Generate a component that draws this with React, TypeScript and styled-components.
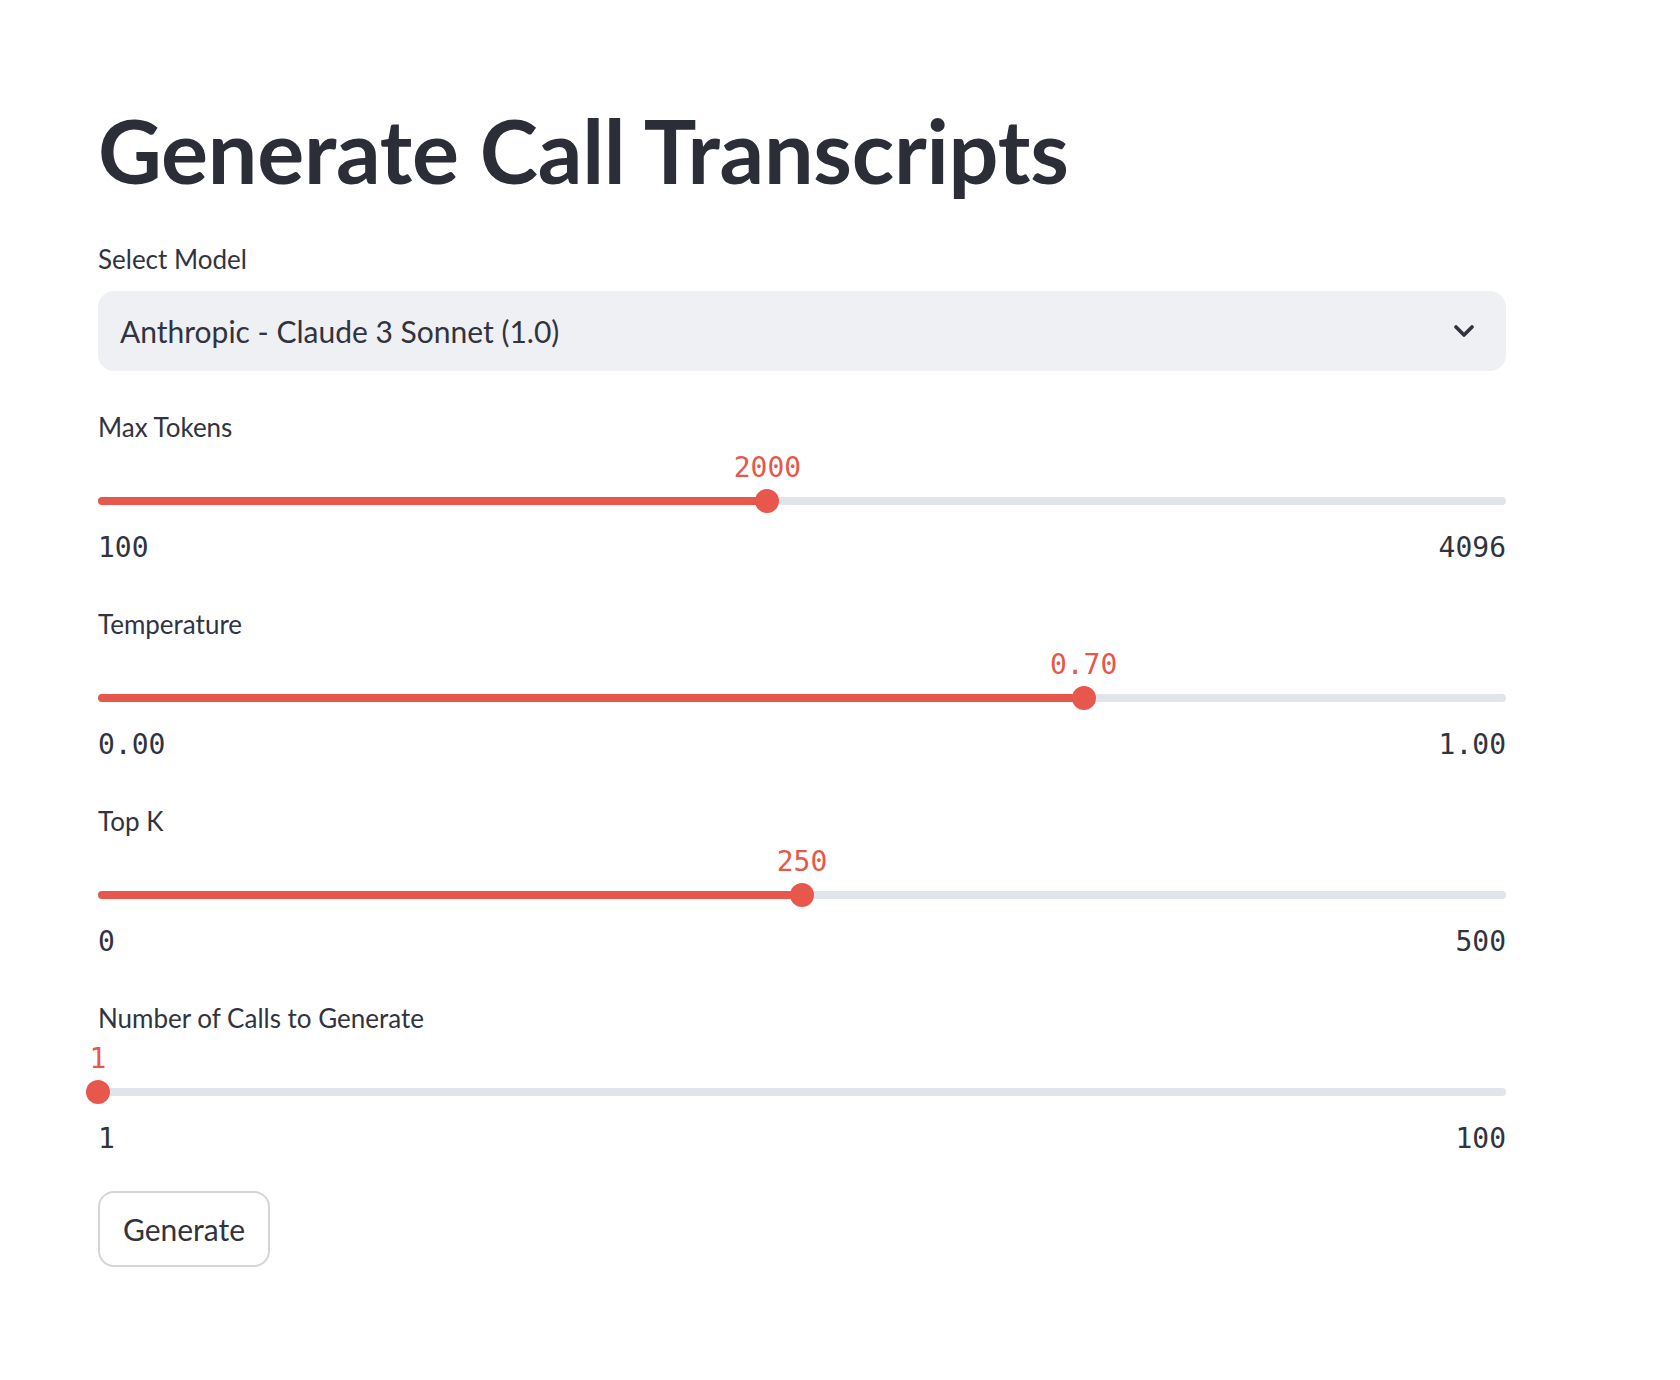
import styled, { createGlobalStyle } from 'styled-components';

const GlobalStyle = createGlobalStyle`
  html, body {
    margin: 0;
    padding: 0;
    background: #ffffff;
  }
  body {
    font-family: Lato, "Noto Sans", sans-serif;
    color: #31333f;
  }
`;

const Page = styled.main`
  width: 1408px;
  padding: 97px 0 80px 98px;
  display: flex;
  flex-direction: column;
`;

const Title = styled.h1`
  margin: 0 0 36px;
  font-size: 88px;
  line-height: 106px;
  font-weight: 700;
  color: #2b2d37;
  letter-spacing: -0.25px;
`;

const Label = styled.div`
  font-size: 26px;
  line-height: 40px;
  height: 40px;
  color: #31333f;
`;

const SelectLabel = styled(Label)`
  margin-bottom: 12px;
`;

const SelectBox = styled.div`
  height: 80px;
  box-sizing: border-box;
  background: #eff0f4;
  border-radius: 16px;
  display: flex;
  align-items: center;
  justify-content: space-between;
  padding: 0 32px 0 22px;
  font-size: 30px;
  color: #31333f;
  margin-bottom: 36px;
`;

const Chevron = () => (
  <svg width="20" height="12" viewBox="0 0 20 12" fill="none">
    <path d="M2 2 L10 10 L18 2" stroke="#31333f" strokeWidth="3.6" strokeLinecap="round" strokeLinejoin="round" />
  </svg>
);

const SliderBlock = styled.section`
  display: flex;
  flex-direction: column;
  margin-bottom: 36px;
`;

const SliderArea = styled.div`
  position: relative;
  padding-top: 42px;
`;

const ValueBubble = styled.div`
  position: absolute;
  top: 1px;
  transform: translateX(-50%);
  font-family: "DejaVu Sans Mono", "Liberation Mono", monospace;
  font-size: 28px;
  line-height: 40px;
  color: #e8574b;
  white-space: nowrap;
`;

const Track = styled.div`
  position: relative;
  height: 24px;
`;

const Rail = styled.div`
  position: absolute;
  left: 0;
  right: 0;
  top: 8px;
  height: 8px;
  border-radius: 4px;
  background: #e2e4ec;
`;

const Fill = styled.div`
  position: absolute;
  left: 0;
  top: 8px;
  height: 8px;
  border-radius: 4px;
  background: #e8574b;
`;

const Thumb = styled.div`
  position: absolute;
  top: 0;
  width: 24px;
  height: 24px;
  border-radius: 50%;
  background: #e8574b;
  transform: translateX(-50%);
`;

const Ticks = styled.div`
  display: flex;
  justify-content: space-between;
  margin-top: 15px;
  font-family: "DejaVu Sans Mono", "Liberation Mono", monospace;
  font-size: 28px;
  line-height: 40px;
  color: #31333f;
`;

const Button = styled.button`
  align-self: flex-start;
  margin-top: -4px;
  height: 76px;
  width: 172px;
  padding: 0;
  background: #ffffff;
  border: 2px solid #d4d5d9;
  border-radius: 16px;
  font-family: Lato, "Noto Sans", sans-serif;
  font-size: 30px;
  color: #31333f;
`;

type SliderProps = {
  label: string;
  min: number;
  max: number;
  value: number;
  digits?: number;
};

function Slider({ label, min, max, value, digits = 0 }: SliderProps) {
  const pct = ((value - min) / (max - min)) * 100;
  const fmt = (n: number) => n.toFixed(digits);

  return (
    <SliderBlock>
      <Label>{label}</Label>
      <SliderArea>
        <ValueBubble style={{ left: `${pct}%` }}>{fmt(value)}</ValueBubble>
        <Track>
          <Rail />
          <Fill style={{ width: `${pct}%` }} />
          <Thumb style={{ left: `${pct}%` }} />
        </Track>
      </SliderArea>
      <Ticks>
        <span>{fmt(min)}</span>
        <span>{fmt(max)}</span>
      </Ticks>
    </SliderBlock>
  );
}

export default function App() {
  return (
    <>
      <GlobalStyle />
      <Page>
        <Title>Generate Call Transcripts</Title>
        <SelectLabel>Select Model</SelectLabel>
        <SelectBox>
          <span>Anthropic - Claude 3 Sonnet (1.0)</span>
          <Chevron />
        </SelectBox>
        <Slider label="Max Tokens" min={100} max={4096} value={2000} />
        <Slider label="Temperature" min={0} max={1} value={0.7} digits={2} />
        <Slider label="Top K" min={0} max={500} value={250} />
        <Slider label="Number of Calls to Generate" min={1} max={100} value={1} />
        <Button>Generate</Button>
      </Page>
    </>
  );
}
